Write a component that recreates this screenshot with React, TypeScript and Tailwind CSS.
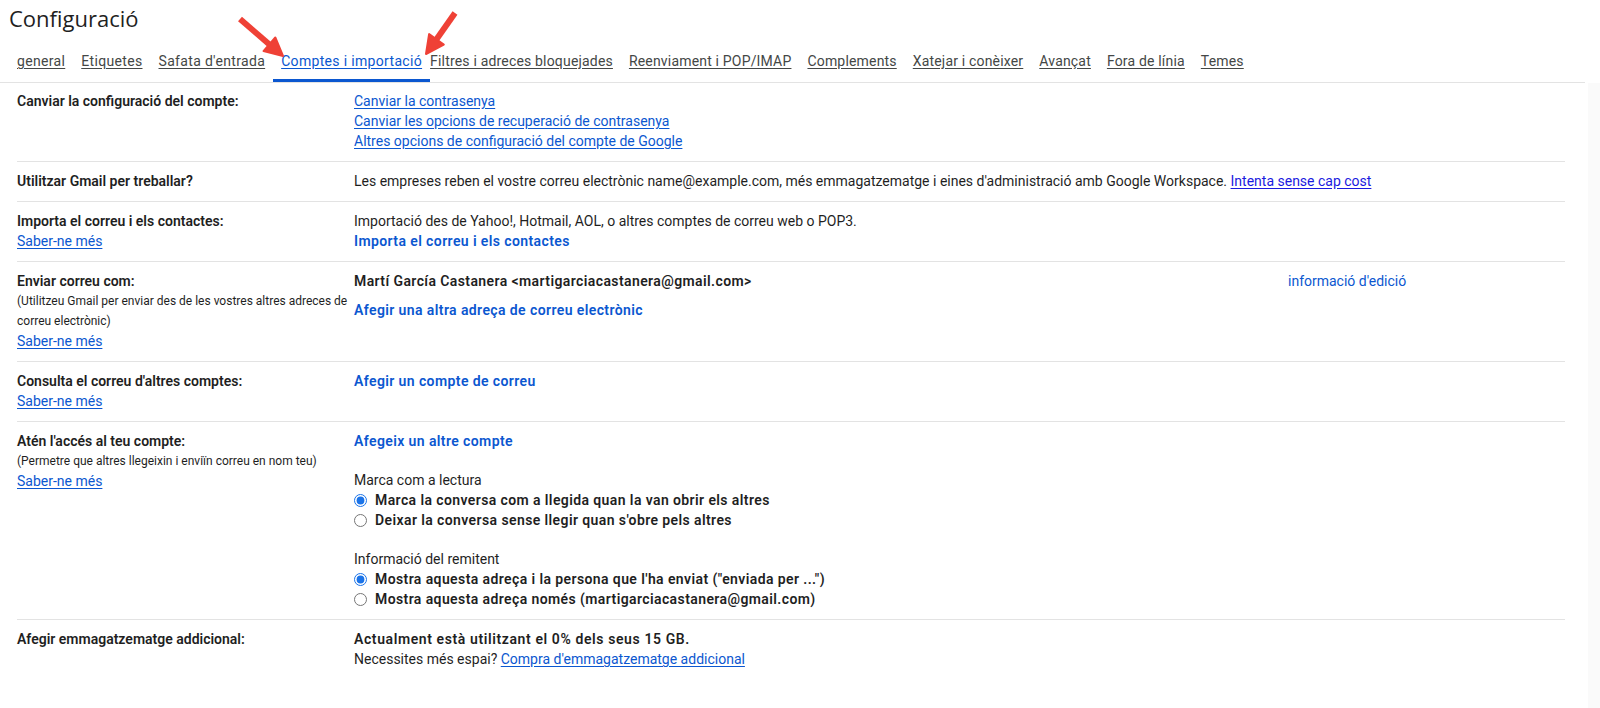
import React from 'react';

// tracking per tab so the labels land where the screenshot has them
const tabs = [
  { t: 'general', cls: 'px-2 tracking-[0.33px]' },
  { t: 'Etiquetes', cls: 'px-2 tracking-[0.33px]' },
  { t: "Safata d'entrada", cls: 'px-2 tracking-[0.33px]' },
  { t: 'Comptes i importació', cls: 'px-2 tracking-[0.33px]' },
  { t: 'Filtres i adreces bloquejades', cls: 'pl-0 pr-2 tracking-[0.18px]' },
  { t: 'Reenviament i POP/IMAP', cls: 'px-2 tracking-[0.18px]' },
  { t: 'Complements', cls: 'px-2 tracking-[0.18px]' },
  { t: 'Xatejar i conèixer', cls: 'px-2 tracking-[0.18px]' },
  { t: 'Avançat', cls: 'px-2 tracking-[0.18px]' },
  { t: 'Fora de línia', cls: 'px-2 tracking-[0.18px]' },
  { t: 'Temes', cls: 'px-2 tracking-[0.18px]' },
];

const ACTIVE = 'Comptes i importació';

function Link({ children }: { children: React.ReactNode }) {
  return <a className="text-[#0b57d0] underline underline-offset-2 cursor-pointer">{children}</a>;
}

function BoldLink({ children }: { children: React.ReactNode }) {
  return <a className="font-semibold tracking-[0.4px] text-[#0b57d0] cursor-pointer">{children}</a>;
}

function Row({
  label,
  left,
  children,
  last,
  first,
}: {
  label: string;
  left?: React.ReactNode;
  children: React.ReactNode;
  last?: boolean;
  first?: boolean;
}) {
  return (
    <div
      className={`flex pb-[10px] ${first ? 'pt-[8px]' : 'pt-[9px]'} ${
        last ? '' : 'border-b border-[#e3e3e3]'
      }`}
    >
      <div className="w-[337px] shrink-0 pr-[4px]">
        <div className="font-semibold text-[#1f1f1f]">{label}</div>
        {left}
      </div>
      <div className="flex-1">{children}</div>
    </div>
  );
}

function Radio({ checked, label }: { checked?: boolean; label: string }) {
  return (
    <label className="flex items-center">
      <input
        type="radio"
        defaultChecked={checked}
        className="m-0 mr-[8px] h-[13px] w-[13px] accent-[#1a73e8]"
        name={label.slice(0, 6)}
      />
      <span className="font-semibold tracking-[0.4px] text-[#1f1f1f]">{label}</span>
    </label>
  );
}

function Arrows() {
  return (
    <svg className="pointer-events-none absolute left-0 top-0" width="600" height="90">
      <g fill="#ef4136" stroke="#ef4136">
        <line x1="240" y1="19" x2="270" y2="45" strokeWidth="6" />
        <polygon points="283,56 263.5,51.1 275.3,37.5" strokeWidth="2" strokeLinejoin="round" />
        <line x1="455" y1="13" x2="436" y2="40" strokeWidth="6" />
        <polygon points="426,54 443.8,44.5 429.1,34.1" strokeWidth="2" strokeLinejoin="round" />
      </g>
    </svg>
  );
}

export default function App() {
  return (
    <div
      className="relative flex h-[708px] w-[1600px] flex-col overflow-hidden bg-white text-[14px] leading-5 text-[#1f1f1f]"
      style={{ fontFamily: 'Roboto, "Liberation Sans", Arial, sans-serif' }}
    >
      <header className="mr-[15px] border-b border-[#e3e3e3] pl-[9px]">
        <h1
          className="pt-[4px] text-[22px] leading-7 text-[#1f1f1f]"
          style={{ fontFamily: '"Open Sans", Roboto, sans-serif' }}
        >
          Configuració
        </h1>
        <nav className="mt-[19px] flex">
          {tabs.map(({ t, cls }) => (
            <a
              key={t}
              className={`cursor-pointer border-b-[3px] pb-[8px] underline underline-offset-2 ${cls} ${
                t === ACTIVE
                  ? 'border-[#0b57d0] text-[#0b57d0]'
                  : 'border-transparent text-[#444746]'
              }`}
            >
              {t}
            </a>
          ))}
        </nav>
      </header>

      <div className="flex flex-1">
        <main className="flex-1 pl-[17px] pr-[23px]">
          <Row label="Canviar la configuració del compte:" first>
            <div className="flex flex-col items-start">
              <Link>Canviar la contrasenya</Link>
              <Link>Canviar les opcions de recuperació de contrasenya</Link>
              <Link>Altres opcions de configuració del compte de Google</Link>
            </div>
          </Row>

          <Row label="Utilitzar Gmail per treballar?">
            <div>
              Les empreses reben el vostre correu electrònic name@example.com, més emmagatzematge i eines
              d'administració amb Google Workspace.{' '}
              <a className="cursor-pointer text-[#1a1ae0] underline underline-offset-2">Intenta sense cap cost</a>
            </div>
          </Row>

          <Row
            label="Importa el correu i els contactes:"
            left={<Link>Saber-ne més</Link>}
          >
            <div>Importació des de Yahoo!, Hotmail, AOL, o altres comptes de correu web o POP3.</div>
            <BoldLink>Importa el correu i els contactes</BoldLink>
          </Row>

          <Row
            label="Enviar correu com:"
            left={
              <>
                <div className="text-[12px] leading-5 text-[#1f1f1f]">
                  (Utilitzeu Gmail per enviar des de les vostres altres adreces de correu electrònic)
                </div>
                <Link>Saber-ne més</Link>
              </>
            }
          >
            <div className="flex">
              <div className="w-[934px] font-semibold tracking-[0.4px]">
                Martí García Castanera &lt;martigarciacastanera@gmail.com&gt;
              </div>
              <a className="cursor-pointer text-[#0b57d0]">informació d'edició</a>
            </div>
            <div className="mt-[9px]">
              <BoldLink>Afegir una altra adreça de correu electrònic</BoldLink>
            </div>
          </Row>

          <Row label="Consulta el correu d'altres comptes:" left={<Link>Saber-ne més</Link>}>
            <BoldLink>Afegir un compte de correu</BoldLink>
          </Row>

          <Row
            label="Atén l'accés al teu compte:"
            left={
              <>
                <div className="text-[12px] leading-5 text-[#1f1f1f]">
                  (Permetre que altres llegeixin i enviïn correu en nom teu)
                </div>
                <Link>Saber-ne més</Link>
              </>
            }
          >
            <BoldLink>Afegeix un altre compte</BoldLink>
            <div className="mt-[19px]">Marca com a lectura</div>
            <Radio checked label="Marca la conversa com a llegida quan la van obrir els altres" />
            <Radio label="Deixar la conversa sense llegir quan s'obre pels altres" />
            <div className="mt-[19px]">Informació del remitent</div>
            <Radio checked label={'Mostra aquesta adreça i la persona que l\'ha enviat ("enviada per ...")'} />
            <Radio label="Mostra aquesta adreça només (martigarciacastanera@gmail.com)" />
          </Row>

          <Row label="Afegir emmagatzematge addicional:" last>
            <div className="font-semibold tracking-[0.6px]">Actualment està utilitzant el 0% dels seus 15 GB.</div>
            <div>
              Necessites més espai? <Link>Compra d'emmagatzematge addicional</Link>
            </div>
          </Row>
        </main>
        <div className="w-[12px] bg-[#fafafa]" />
      </div>

      <Arrows />
    </div>
  );
}
